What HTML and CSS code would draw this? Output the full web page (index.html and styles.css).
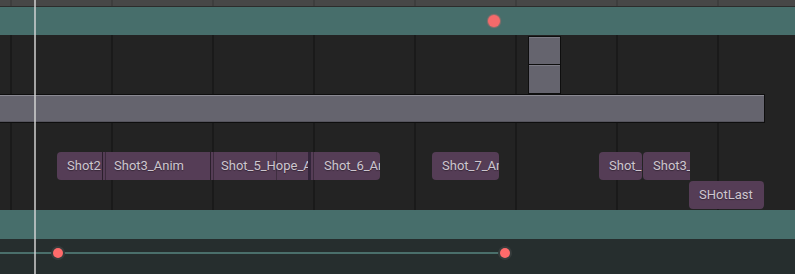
FILE: index.html
```html
<!DOCTYPE html>
<html lang="en">
<head>
    <meta charset="UTF-8">
    <meta name="viewport" content="width=device-width, initial-scale=1.0">
    <title>Sequencer</title>
    <link rel="stylesheet" href="styles.css">
</head>
<body>
    <div class="timeline">
        <div class="ruler"></div>

        <div class="band">
            <span class="key key-top" style="left: 488px;"></span>
        </div>

        <div class="tracks">
            <div class="key-row">
                <div class="stack">
                    <div class="block"></div>
                    <div class="block"></div>
                </div>
            </div>

            <div class="long-bar"></div>

            <div class="clip-layer">
                <div class="clip round-l" style="left: 57px; width: 45px;">Shot2</div>
                <div class="clip dashed wide-pad" style="left: 102px; width: 108px;">Shot3_Anim</div>
                <div class="clip dashed mark" style="left: 210px; width: 98px;">Shot_5_Hope_Anim</div>
                <div class="clip dashed round-r seam" style="left: 308px; width: 72px;">Shot_6_Anim</div>
                <div class="clip round-l round-r" style="left: 432px; width: 67px;">Shot_7_Anim</div>
                <div class="clip round-l round-r" style="left: 599px; width: 43px;">Shot_8</div>
                <div class="clip round-l" style="left: 643px; width: 47px;">Shot3_Copy</div>
                <div class="clip round-l round-r low" style="left: 689px; width: 75px;">SHotLast</div>
            </div>
        </div>

        <div class="band band-low"></div>

        <div class="curve">
            <div class="curve-line"></div>
            <span class="key key-curve" style="left: 53px;"></span>
            <span class="key key-curve" style="left: 500px;"></span>
        </div>

        <div class="playhead"></div>
    </div>
</body>
</html>
```

FILE: styles.css
```css
body {
    margin: 0;
    padding: 0;
    background-color: #232323;
    font-family: Roboto, 'Liberation Sans', Arial, sans-serif;
    overflow: hidden;
}

.timeline {
    position: relative;
    width: 795px;
    height: 274px;
    overflow: hidden;
}

/* grid lines every 101px */
.ruler,
.tracks {
    background-repeat: repeat-x;
    background-size: 101px 100%;
    background-position: 10px 0;
}

.ruler {
    height: 6px;
    background-color: #474747;
    background-image: linear-gradient(to right, #3e3e3e 0 2px, transparent 2px);
    border-bottom: 1px solid #2c2c2c;
}

.band {
    position: relative;
    height: 28px;
    background-color: #476e6b;
}

.band-low {
    height: 29px;
}

.tracks {
    height: 175px;
    background-color: #232323;
    background-image: linear-gradient(to right, #1a1a1a 0 2px, transparent 2px);
    display: flex;
    flex-direction: column;
}

.key-row {
    height: 59px;
    padding-top: 1px;
    box-sizing: border-box;
}

.stack {
    margin-left: 528px;
    width: 33px;
    display: flex;
    flex-direction: column;
}

.block {
    height: 29px;
    box-sizing: border-box;
    background-color: #65646e;
    border: 1px solid #0e0e0e;
    box-shadow: inset 0 1px #7c7b85;
}

.block + .block {
    margin-top: -1px;
    height: 30px;
}

.long-bar {
    width: 765px;
    height: 29px;
    box-sizing: border-box;
    background-color: #65646e;
    border: 1px solid #0e0e0e;
    border-left: none;
    box-shadow: inset 0 1px #8a8992, inset 0 -1px #55545d;
}

.clip-layer {
    position: relative;
    flex: 1;
}

.clip {
    position: absolute;
    top: 29px;
    height: 28px;
    box-sizing: border-box;
    padding-left: 10px;
    background-color: #553d56;
    color: #cdc6cf;
    font-size: 13px;
    line-height: 28px;
    white-space: nowrap;
    overflow: hidden;
    text-shadow: 0 1px 1px rgba(0, 0, 0, 0.35);
}

.clip.low {
    top: 58px;
}

.round-l {
    border-top-left-radius: 4px;
    border-bottom-left-radius: 4px;
}

.round-r {
    border-top-right-radius: 4px;
    border-bottom-right-radius: 4px;
}

.dashed {
    border-left: 1px solid #2b1f2c;
    box-shadow: inset 2px 0 #553d56, inset 3px 0 #3c2b3d;
}

.wide-pad {
    padding-left: 11px;
}

.mark {
    background-image: linear-gradient(to right, transparent 65px, #3f2e40 65px 66px, transparent 66px);
}

.seam {
    border-left: 3px solid #33253a;
    padding-left: 13px;
}

.curve {
    position: relative;
    height: 35px;
    background-color: #262e2e;
}

.curve-line {
    position: absolute;
    top: 13px;
    left: 0;
    width: 505px;
    height: 2px;
    background-color: #4a6f6b;
}

.key {
    position: absolute;
    border-radius: 50%;
}

.key-top {
    top: 8px;
    width: 12px;
    height: 12px;
    background-color: #f46a6b;
    box-shadow: 0 0 1px 1px rgba(244, 106, 107, 0.45);
}

.key-curve {
    top: 9px;
    width: 10px;
    height: 10px;
    background-color: #ff6b6b;
    box-shadow: 0 0 0 2px #363c3c;
}

.playhead {
    position: absolute;
    top: 0;
    left: 34px;
    width: 2px;
    height: 274px;
    background-color: rgba(215, 215, 215, 0.72);
}
```
